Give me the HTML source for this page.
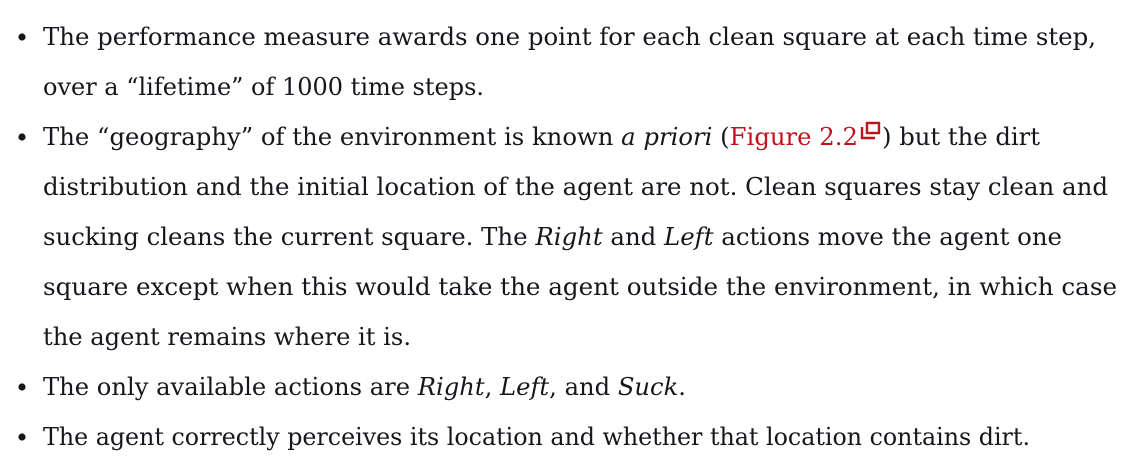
<!DOCTYPE html>
<html><head><meta charset="utf-8"><style>
html,body{margin:0;padding:0;background:#fff;width:1125px;height:466px;overflow:hidden}
svg{display:block}
text{font-family:"DejaVu Serif",serif;font-size:24px;fill:#16161c}
.i{font-style:italic}
.r{fill:#c0121c}
</style></head><body>
<svg width="1125" height="466" xmlns="http://www.w3.org/2000/svg">
<g fill="#16161c">
<circle cx="22" cy="37" r="3.6"/><circle cx="22" cy="137" r="3.6"/><circle cx="22" cy="387" r="3.6"/><circle cx="22" cy="437" r="3.6"/>
</g>
<text x="43" y="45" textLength="1053" lengthAdjust="spacingAndGlyphs">The performance measure awards one point for each clean square at each time step,</text>
<text x="43" y="95" textLength="441" lengthAdjust="spacingAndGlyphs">over a “lifetime” of 1000 time steps.</text>
<text x="43" y="145" textLength="815" lengthAdjust="spacingAndGlyphs">The “geography” of the environment is known <tspan class="i">a priori</tspan> (<tspan class="r">Figure 2.2</tspan></text>
<g fill="none" stroke="#c0121c" stroke-width="2.4">
<rect x="867" y="123" width="12" height="10"/>
<path d="M862 127 V138 H875"/>
</g>
<text x="882" y="145" textLength="158" lengthAdjust="spacingAndGlyphs">) but the dirt</text>
<text x="43" y="195" textLength="1065" lengthAdjust="spacingAndGlyphs">distribution and the initial location of the agent are not. Clean squares stay clean and</text>
<text x="43" y="245" textLength="1019" lengthAdjust="spacingAndGlyphs">sucking cleans the current square. The <tspan class="i">Right</tspan> and <tspan class="i">Left</tspan> actions move the agent one</text>
<text x="43" y="295" textLength="1074" lengthAdjust="spacingAndGlyphs">square except when this would take the agent outside the environment, in which case</text>
<text x="43" y="345" textLength="368" lengthAdjust="spacingAndGlyphs">the agent remains where it is.</text>
<text x="43" y="395" textLength="643" lengthAdjust="spacingAndGlyphs">The only available actions are <tspan class="i">Right</tspan>, <tspan class="i">Left</tspan>, and <tspan class="i">Suck</tspan>.</text>
<text x="43" y="445" textLength="987" lengthAdjust="spacingAndGlyphs">The agent correctly perceives its location and whether that location contains dirt.</text>
</svg>
</body></html>
